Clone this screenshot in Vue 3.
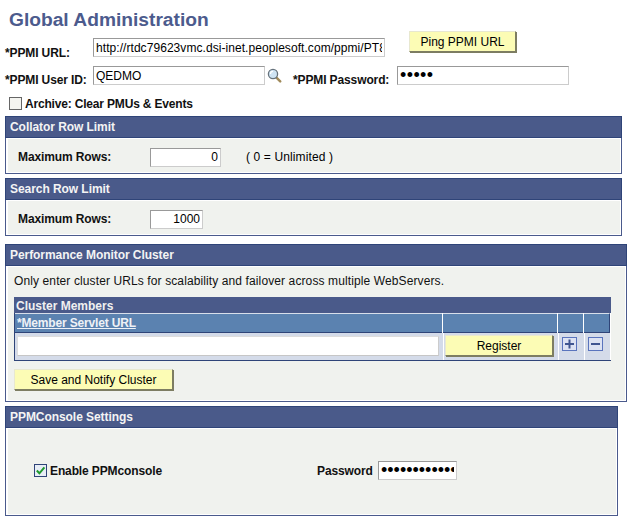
<script setup>
const columns = ['*Member Servlet URL', '', '', '']
</script>

<template>
  <div class="page">
    <h1 class="title">Global Administration</h1>

    <div class="form-row url-row">
      <label class="field-label url-label">*PPMI URL:</label>
      <input class="text url-input" value="http://rtdc79623vmc.dsi-inet.peoplesoft.com/ppmi/PT8.50/" />
      <button class="ps-btn ping">Ping PPMI URL</button>
    </div>

    <div class="form-row user-row">
      <label class="field-label user-label">*PPMI User ID:</label>
      <input class="text user-input" value="QEDMO" />
      <svg class="lens" width="15" height="15" viewBox="0 0 15 15">
        <path d="M9.2 9.4l4 4" stroke="#a08a5a" stroke-width="2.4" stroke-linecap="round" />
        <circle cx="6" cy="6" r="4.6" fill="#cfe4f4" stroke="#66727c" stroke-width="1.3" />
        <path d="M3.5 6a2.6 2.6 0 0 1 2.5-2.6" fill="none" stroke="#fff" stroke-width="1.1" />
      </svg>
      <label class="field-label pass-label">*PPMI Password:</label>
      <input class="text pass-input dots" type="password" value="abcde" />
    </div>

    <div class="archive-row">
      <span class="check"></span>
      <span class="field-label archive-label">Archive: Clear PMUs &amp; Events</span>
    </div>

    <section class="panel collator">
      <header class="panel-head">Collator Row Limit</header>
      <div class="panel-body limit-body">
        <span class="field-label rows-label">Maximum Rows:</span>
        <input class="text num wide" value="0" />
        <span class="note">( 0 = Unlimited )</span>
      </div>
    </section>

    <section class="panel search">
      <header class="panel-head">Search Row Limit</header>
      <div class="panel-body limit-body">
        <span class="field-label rows-label">Maximum Rows:</span>
        <input class="text num narrow" value="1000" />
      </div>
    </section>

    <section class="panel cluster">
      <header class="panel-head">Performance Monitor Cluster</header>
      <div class="panel-body cluster-body">
        <p class="hint">Only enter cluster URLs for scalability and failover across multiple WebServers.</p>
        <div class="grid">
          <div class="grid-title">Cluster Members</div>
          <div class="grid-cols">
            <div v-for="(c, i) in columns" :key="i" class="col-head" :class="'c' + i">
              <a v-if="c" class="col-link">{{ c }}</a>
            </div>
          </div>
          <div class="grid-cols data">
            <div class="cell c0"><input class="text member" /></div>
            <div class="cell c1"><button class="ps-btn register">Register</button></div>
            <div class="cell c2 icon-cell">
              <svg width="15" height="14" viewBox="0 0 15 14">
                <rect x="0.5" y="0.5" width="14" height="13" fill="#dce2f2" stroke="#5a74bd" />
                <path d="M3 7h9M7.5 2.5v9" stroke="#3f5590" stroke-width="2" />
              </svg>
            </div>
            <div class="cell c3 icon-cell">
              <svg width="15" height="14" viewBox="0 0 15 14">
                <rect x="0.5" y="0.5" width="14" height="13" fill="#dce2f2" stroke="#5a74bd" />
                <path d="M3 7h9" stroke="#3f5590" stroke-width="2" />
              </svg>
            </div>
          </div>
        </div>
        <button class="ps-btn save">Save and Notify Cluster</button>
      </div>
    </section>

    <section class="panel console">
      <header class="panel-head">PPMConsole Settings</header>
      <div class="panel-body console-body">
        <span class="check checked">
          <svg width="11" height="11" viewBox="0 0 11 11">
            <path d="M1.8 5.5l2.6 2.8 5-6" fill="none" stroke="#1f9a2e" stroke-width="2" />
          </svg>
        </span>
        <span class="field-label enable">Enable PPMconsole</span>
        <span class="field-label console-pass">Password</span>
        <input class="text console-input dots" type="password" value="abcdefghijkl" />
      </div>
    </section>
  </div>
</template>

<style>
html, body { background: #fff; }
</style>

<style scoped>
.page {
  width: 637px;
  height: 522px;
  overflow: hidden;
  box-sizing: border-box;
  padding: 9px 0 0 5px;
  font: 12px "Liberation Sans", Arial, sans-serif;
  color: #000;
  background: #fff;
}
.title {
  margin: 0 0 0 4px;
  height: 22px;
  font: bold 19.2px/22px "Liberation Sans", Arial, sans-serif;
  color: #4c5b8d;
}
.form-row { display: flex; align-items: flex-start; }
.url-row { height: 35px; }
.user-row { height: 31px; }
.field-label { font-weight: bold; color: #111; white-space: nowrap; letter-spacing: -0.12px; }
.url-label { width: 88px; margin-top: 15px; }
.user-label { width: 88px; margin-top: 7px; }
.text {
  box-sizing: border-box;
  height: 19px;
  padding: 0 2px;
  margin: 0;
  font: 12px "Liberation Sans", Arial, sans-serif;
  color: #000;
  background: #fff;
  border: 1px solid;
  border-color: #999 #ccc #ccc #999;
  outline: none;
}
.dots { font-size: 18px; }
.url-input { width: 292px; margin-top: 7px; letter-spacing: 0.06px; }
.user-input { width: 172px; }
.lens { margin: 2px 0 0 2px; flex: none; }
.pass-label { margin: 7px 0 0 11px; width: 104px; }
.pass-input { width: 172px; letter-spacing: 0.4px; }
.ps-btn {
  box-sizing: border-box;
  margin: 0;
  padding: 0;
  font: 12px "Liberation Sans", Arial, sans-serif;
  color: #000;
  background: #fcfcb5;
  border: 1px solid;
  border-color: #e8e8d0 #7d7d62 #7d7d62 #e8e8d0;
  box-shadow: 1px 1px 0 #7d7d62;
}
.ping { width: 107px; height: 21px; margin-left: 24px; }
.archive-row { display: flex; align-items: flex-start; height: 19px; padding-left: 4px; }
.archive-label { letter-spacing: -0.18px; line-height: 15px; }
.check {
  box-sizing: border-box;
  flex: none;
  width: 13px;
  height: 13px;
  margin-right: 3px;
  border: 1px solid #666;
  background: #f4f4f0;
}
.panel {
  box-sizing: border-box;
  border: 1px solid #4a5a8c;
  background: #fff;
  display: flex;
  flex-direction: column;
}
.panel-head {
  flex: none;
  box-sizing: border-box;
  height: 22px;
  margin: -1px -1px 0;
  padding-left: 4px;
  font-weight: bold;
  line-height: 21px;
  color: #f4f4f4;
  background: #4a5a8a;
  border: 1px solid #2f4478;
  letter-spacing: -0.06px;
}
.panel-body {
  flex: 1;
  margin: 1px 1px 1px 2px;
  background: #f0f2ee;
}
.collator { width: 617px; height: 58px; }
.search { width: 617px; height: 58px; margin-top: 4px; }
.cluster { width: 622px; height: 158px; margin-top: 8px; }
.console { width: 613px; height: 110px; margin-top: 4px; }
.limit-body { display: flex; align-items: center; padding: 3px 0 0 10px; }
.rows-label { width: 132px; }
.num { text-align: right; }
.wide { width: 71px; }
.narrow { width: 53px; }
.note { margin-left: 25px; letter-spacing: 0.12px; }
.cluster-body { padding: 7px 0 0 6px; }
.hint { margin: 0; height: 23px; line-height: 15px; color: #111; letter-spacing: 0.11px; }
.grid {
  box-sizing: border-box;
  width: 597px;
  height: 64px;
  background: #fff;
  border-left: 1px solid #2f4478;
  border-bottom: 1px solid #2f4478;
}
.grid-title {
  height: 16px;
  margin-left: -1px;
  padding-left: 2px;
  font-weight: bold;
  line-height: 18px;
  color: #f0f0f0;
  background: #4a5a8a;
}
.grid-cols { display: flex; }
.col-head {
  box-sizing: border-box;
  height: 20px;
  margin-right: 1px;
  background: #5b82b0;
  border-top: 1px solid #d8dfea;
  border-bottom: 1px solid #2f4478;
}
.col-link {
  display: block;
  padding-left: 2px;
  font-weight: bold;
  line-height: 18px;
  letter-spacing: -0.17px;
  color: #eef1f6;
  text-decoration: underline;
}
.c0 { width: 428px; }
.c1 { width: 114px; }
.c2 { width: 25px; }
.c3 { width: 25px; }
.col-head.c3 { border-right: 1px solid #2f4478; width: 26px; }
.data { height: 27px; }
.cell {
  box-sizing: border-box;
  height: 27px;
  margin-right: 1px;
  background: #d4dbe9;
}
.cell.c0 { padding: 3px 0 0 2px; }
.member { display: block; width: 422px; height: 20px; border-color: #ddd #ccc #c6c6c6 #ddd; }
.cell.c1 { padding: 2px 0 0 1px; }
.register { display: block; width: 108px; height: 21px; }
.icon-cell { padding: 4px 0 0 3px; }
.icon-cell svg { display: block; }
.save { display: block; width: 159px; height: 21px; margin-top: 8px; }
.console-body { display: flex; align-items: center; padding-left: 26px; padding-bottom: 2px; }
.checked {
  display: flex;
  align-items: center;
  justify-content: center;
  border: 1px solid #2f4478;
  background: #e8eef6;
}
.enable { width: 267px; }
.console-pass { width: 61px; }
.console-input { width: 79px; }
</style>
